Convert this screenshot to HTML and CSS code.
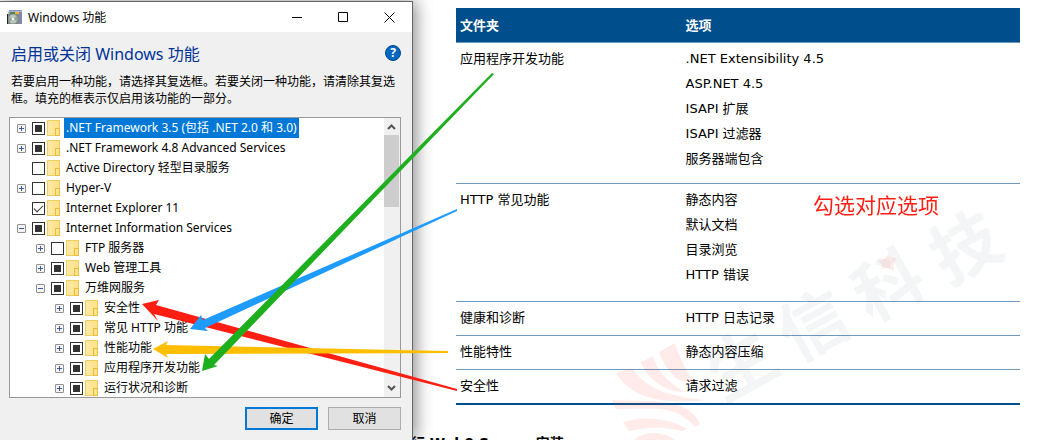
FILE: index.html
```html
<!doctype html>
<html lang="zh-CN">
<head>
  <meta charset="UTF-8">
  <meta name="viewport" content="width=device-width, initial-scale=1.0">
  <title>Windows 功能</title>
  <link rel="stylesheet" href="styles.css">
</head>
<body>
  <section class="dialog">
    <header class="titlebar">
      <svg class="app-icon" width="16" height="16" viewBox="0 0 16 16">
        <path d="M2 1h13v1.500H2z" fill="#8f8fcb"/>
        <path d="M1 2.500h14V15H3z" fill="#9fa6a6"/>
        <path d="M3 3h8v3H3z" fill="#3f8a5c"/>
        <path d="M8 3h5v3H8z" fill="#f3b52c"/>
        <path d="M12 3h3v12h-3z" fill="#8585ad"/>
        <path d="M0 5h12v10H0z" fill="#7f8a84"/>
        <path d="M0 5h1v10H0z" fill="#222"/>
        <circle cx="6" cy="10" r="4.500" fill="#b9c6bd"/>
        <path d="M6 10l4-3v5zM6 10l-4 3v-5z" fill="#8fa394"/>
        <circle cx="6" cy="10" r="1.300" fill="#fff"/>
      </svg>
      <span class="title">Windows 功能</span>
      <button class="win-btn" aria-label="最小化"><svg width="11" height="11"><path d="M0 5.500h10"/></svg></button>
      <button class="win-btn" aria-label="最大化"><svg width="11" height="11"><path d="M.5.5h9v9h-9z"/></svg></button>
      <button class="win-btn" aria-label="关闭"><svg width="11" height="11"><path d="M.5.500l10 10M10.500.500l-10 10"/></svg></button>
    </header>

    <div class="content">
      <div class="heading">
        <h1>启用或关闭 Windows 功能</h1>
        <button class="help" aria-label="帮助">?</button>
      </div>
      <p class="intro">若要启用一种功能，请选择其复选框。若要关闭一种功能，请清除其复选框。填充的框表示仅启用该功能的一部分。</p>

      <div class="tree">
        <ul class="rows">
          <li><button class="exp plus" aria-label="展开"></button><input type="checkbox" class="part" id="f1"><i class="folder"></i><label class="selected" for="f1">.NET Framework 3.5 (包括 .NET 2.0 和 3.0)</label></li>
          <li><button class="exp plus" aria-label="展开"></button><input type="checkbox" class="part" id="f2"><i class="folder"></i><label for="f2">.NET Framework 4.8 Advanced Services</label></li>
          <li><span class="exp-gap"></span><input type="checkbox" id="f3"><i class="folder"></i><label for="f3">Active Directory 轻型目录服务</label></li>
          <li><button class="exp plus" aria-label="展开"></button><input type="checkbox" id="f4"><i class="folder"></i><label for="f4">Hyper-V</label></li>
          <li><span class="exp-gap"></span><input type="checkbox" id="f5" checked><i class="folder"></i><label for="f5">Internet Explorer 11</label></li>
          <li><button class="exp" aria-label="折叠"></button><input type="checkbox" class="part" id="f6"><i class="folder"></i><label for="f6">Internet Information Services</label></li>
          <li class="l2"><button class="exp plus" aria-label="展开"></button><input type="checkbox" id="f7"><i class="folder"></i><label for="f7">FTP 服务器</label></li>
          <li class="l2"><button class="exp plus" aria-label="展开"></button><input type="checkbox" class="part" id="f8"><i class="folder"></i><label for="f8">Web 管理工具</label></li>
          <li class="l2"><button class="exp" aria-label="折叠"></button><input type="checkbox" class="part" id="f9"><i class="folder"></i><label for="f9">万维网服务</label></li>
          <li class="l3"><button class="exp plus" aria-label="展开"></button><input type="checkbox" class="part" id="f10"><i class="folder"></i><label for="f10">安全性</label></li>
          <li class="l3"><button class="exp plus" aria-label="展开"></button><input type="checkbox" class="part" id="f11"><i class="folder"></i><label for="f11">常见 HTTP 功能</label></li>
          <li class="l3"><button class="exp plus" aria-label="展开"></button><input type="checkbox" class="part" id="f12"><i class="folder"></i><label for="f12">性能功能</label></li>
          <li class="l3"><button class="exp plus" aria-label="展开"></button><input type="checkbox" class="part" id="f13"><i class="folder"></i><label for="f13">应用程序开发功能</label></li>
          <li class="l3"><button class="exp plus" aria-label="展开"></button><input type="checkbox" class="part" id="f14"><i class="folder"></i><label for="f14">运行状况和诊断</label></li>
        </ul>
        <div class="scrollbar">
          <svg width="15" height="17"><path d="M4 11l3.500-3.500L11 11"/></svg>
          <div class="thumb"></div>
          <svg width="15" height="17"><path d="M4 6l3.500 3.500L11 6"/></svg>
        </div>
      </div>

      <div class="actions">
        <button class="btn primary">确定</button>
        <button class="btn">取消</button>
      </div>
    </div>
  </section>

  <main class="doc">
    <table>
      <thead>
        <tr><th>文件夹</th><th>选项</th></tr>
      </thead>
      <tbody>
        <tr class="dev"><td>应用程序开发功能</td><td>.NET Extensibility 4.5<br>ASP.NET 4.5<br>ISAPI 扩展<br>ISAPI 过滤器<br>服务器端包含</td></tr>
        <tr class="http"><td>HTTP 常见功能</td><td>静态内容<br>默认文档<br>目录浏览<br>HTTP 错误</td></tr>
        <tr><td>健康和诊断</td><td>HTTP 日志记录</td></tr>
        <tr><td>性能特性</td><td>静态内容压缩</td></tr>
        <tr><td>安全性</td><td>请求过滤</td></tr>
      </tbody>
    </table>
    <h2>行 Web0 Server 安装</h2>
  </main>

  <!-- watermark, arrows and note on top of both parts -->
  <svg class="overlay" width="1048" height="440" viewBox="0 0 1048 440">
    <g class="mark-text">
      <text transform="translate(739 360) rotate(-29)">生</text>
      <text transform="translate(811 321) rotate(-29)">信</text>
      <text transform="translate(886 281) rotate(-29)">科</text>
      <text transform="translate(963 243) rotate(-29)">技</text>
    </g>
    <g class="mark-logo">
      <path d="M877 261Q886 260 889 253Q890 259 897 258Q892 263 894 271Q889 266 881 269Q884 264 877 261z"/>
      <path d="M659 352L675 343Q682 365 693 381Q682 383 676 378Q665 368 659 352z"/>
      <path d="M641 362L653 356Q658 376 684 392Q670 392 660 385Q646 376 641 362z"/>
      <path d="M616 373L632 368Q645 388 674 395Q688 399 705 400Q673 404 651 398Q628 392 616 373z"/>
      <path d="M612 400L640 401Q664 400 683 407Q695 413 700 424L695 427Q681 411 661 409Q640 408 616 409z"/>
      <path d="M623 422Q642 416 662 420Q678 423 687 429L682 431Q663 426 650 428Q638 429 629 431z"/>
      <path d="M634 440Q643 432 657 433Q669 435 675 440z"/>
    </g>
    <path fill="#ff1e12" d="M142 304L159 300L156 305L457 389L457 391L154 314L158 321z"/>
    <path fill="#1e9bff" d="M190 329L201 315L203 320L457 209L457 211L205 328L208 331z"/>
    <path fill="#ffbe00" d="M153 349L168 341L166 345L448 351L448 353L166 354L168 358z"/>
    <path fill="#1eaf1e" d="M202 371L205 354L209 359L492 73L494 74L214 365L218 366z"/>
    <text class="note" x="813" y="213">勾选对应选项</text>
  </svg>
</body>
</html>
```

FILE: styles.css
```css
:root {
  --ui-font: "Noto Sans", "Noto Sans CJK SC", sans-serif;
  --doc-font: "DejaVu Sans", "Noto Sans CJK SC", sans-serif;
  --blue: #004e8c;
}

* {
  box-sizing: border-box;
}

body {
  position: relative;
  display: flex;
  height: 100vh;
  margin: 0;
  overflow: hidden;
  background: #fff;
  color: #000;
}

button {
  padding: 0;
  font-family: inherit;
}

/* dialog */
.dialog {
  position: relative;
  z-index: 1;
  flex: none;
  width: 413px;
  margin-top: 1px;
  border-top: 1px solid #666;
  border-right: 1px solid #666;
  background: #f0f0f0;
  box-shadow: 3px 0 16px rgba(0, 0, 0, 0.45);
  font-family: var(--ui-font);
  font-size: 12px;
}

.titlebar {
  display: flex;
  align-items: center;
  height: 30px;
  padding-left: 7px;
  background: #fff;
}

.title {
  flex: 1;
  padding-left: 5px;
}

.win-btn {
  width: 46px;
  height: 28px;
  border: 0;
  background: none;
}

.win-btn svg {
  display: block;
  margin: auto;
  fill: none;
  stroke: #000;
}

.content {
  padding: 8px 11px 0 9px;
}

.heading {
  display: flex;
  align-items: center;
  justify-content: space-between;
  height: 26px;
  padding-left: 2px;
}

h1 {
  margin: 0;
  color: #003399;
  font-size: 16px;
  font-weight: normal;
}

.help {
  width: 16px;
  height: 16px;
  border: 1px solid #004a8c;
  border-radius: 50%;
  background: #0067c0;
  color: #fff;
  font-size: 12px;
  font-weight: bold;
  line-height: 14px;
}

.intro {
  margin: 7px 0 10px;
  padding-left: 2px;
  line-height: 17px;
}

.tree {
  display: flex;
  height: 281px;
  border: 1px solid #999;
  background: #fff;
  overflow: hidden;
}

.rows {
  flex: 1;
  margin: 0;
  padding: 0;
  list-style: none;
}

.rows li {
  display: flex;
  align-items: center;
  height: 20px;
  padding-left: 7px;
}

.rows .l2 {
  padding-left: 26px;
}

.rows .l3 {
  padding-left: 45px;
}

.exp,
.exp-gap {
  width: 9px;
  height: 9px;
  margin-right: 6px;
}

.exp {
  border: 1px solid #919191;
  border-radius: 1px;
  background: linear-gradient(#3c5a9e, #3c5a9e) center / 5px 1px no-repeat, #f4f4f4;
}

.exp.plus {
  background: linear-gradient(#3c5a9e, #3c5a9e) center / 5px 1px no-repeat, linear-gradient(#3c5a9e, #3c5a9e) center / 1px 5px no-repeat, #f4f4f4;
}

.rows input {
  width: 13px;
  height: 13px;
  margin: 0 2px 0 0;
  border: 1px solid #333;
  background: #fff;
  appearance: none;
}

.rows input.part {
  background: linear-gradient(#333, #333) center / 7px 7px no-repeat, #fff;
}

.rows input:checked::before {
  content: "";
  display: block;
  width: 8px;
  height: 4px;
  margin: 2px 0 0 1px;
  border-left: 1px solid #333;
  border-bottom: 1px solid #333;
  transform: rotate(-45deg);
}

.folder {
  position: relative;
  width: 13px;
  height: 16px;
  margin-right: 4px;
  border: 1px solid #f0cf5c;
  background: linear-gradient(90deg, #ffeaa6, #ffe08a);
}

.folder::after {
  content: "";
  position: absolute;
  right: -1px;
  bottom: -1px;
  width: 3px;
  height: 6px;
  border: 1px solid #e8bf3c;
}

.rows label {
  height: 20px;
  padding: 0 2px;
  line-height: 20px;
  white-space: nowrap;
}

.rows .selected {
  background: #0078d7;
  color: #fff;
}

.scrollbar {
  display: flex;
  flex-direction: column;
  width: 16px;
  background: #f0f0f0;
}

.scrollbar svg {
  fill: none;
  stroke: #555;
  stroke-width: 2;
}

.scrollbar svg:last-child {
  margin-top: auto;
}

.thumb {
  width: 15px;
  height: 72px;
  background: #cdcdcd;
}

.actions {
  display: flex;
  justify-content: flex-end;
  gap: 10px;
  margin-top: 9px;
}

.btn {
  width: 73px;
  height: 23px;
  border: 1px solid #adadad;
  background: #e1e1e1;
  color: #000;
  font-size: 12px;
  line-height: 20px;
}

.btn.primary {
  border: 2px solid #0078d7;
  line-height: 18px;
}

/* document */
.doc {
  flex: 1;
  min-width: 0;
  padding: 8px 28px 0 43px;
  overflow: hidden;
  font-family: var(--doc-font);
  font-size: 13px;
}

table {
  width: 100%;
  border-collapse: separate;
  border-spacing: 0;
  table-layout: fixed;
  line-height: 25px;
}

th,
td {
  padding: 3px 4px 5px;
  border-bottom: 1px solid #6f9bc0;
  text-align: left;
  vertical-align: top;
}

th {
  padding: 5px 4px 4px;
  background: var(--blue);
  color: #fff;
}

th:first-child {
  width: 40%;
}

.dev td {
  padding-bottom: 12px;
}

.http td {
  padding-bottom: 14px;
}

tbody tr:last-child td {
  border-bottom: 2px solid var(--blue);
}

h2 {
  margin: 28px 0 0 -45px;
  font-size: 14px;
  line-height: 20px;
  white-space: nowrap;
}

.overlay {
  position: absolute;
  z-index: 2;
  top: 0;
  left: 0;
  pointer-events: none;
}

.mark-text {
  fill: #30506e;
  opacity: 0.06;
  font-family: "Noto Sans CJK SC", sans-serif;
  font-size: 68px;
  font-weight: bold;
  text-anchor: middle;
  dominant-baseline: central;
}

.mark-logo {
  fill: #f03c32;
  opacity: 0.1;
}

.note {
  fill: #ff1e12;
  font-family: "Noto Sans CJK SC", sans-serif;
  font-size: 21px;
}
```
